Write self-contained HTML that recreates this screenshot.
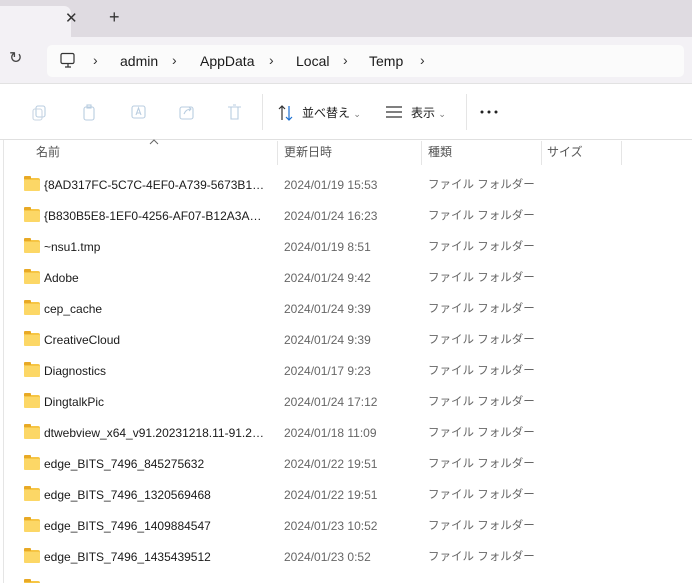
<!DOCTYPE html><html><head><meta charset="utf-8"><style>
*{margin:0;padding:0;box-sizing:border-box}
html,body{width:692px;height:583px;overflow:hidden}
body{background:#fff;font-family:"Liberation Sans","Noto Sans CJK JP",sans-serif;font-size:12px;line-height:16px;color:#1a1a1a;position:relative}
.abs{position:absolute}
.tabbar{left:0;top:0;width:692px;height:37px;background:#dfdbe1}
.tab{left:0;top:6px;width:71px;height:31px;background:#f3f1f5;border-radius:0 7px 0 0}
.addr{left:0;top:37px;width:692px;height:47px;background:#f3f1f5;border-bottom:1px solid #e2e2e2}
.box{left:47px;top:45px;width:637px;height:32px;background:#fbfbfb;border-radius:5px}
.bc{top:53px;font-size:14px;color:#1a1a1a}
.chev{top:52px;font-size:14px;color:#333}
.tb{top:84px;height:56px;width:692px;border-bottom:1px solid #e0e0e0;background:#fff}
.hdr{top:144px;font-size:12px;color:#555}
.vl{top:141px;height:24px;width:1px;background:#e5e5e5}
.row{left:24px;height:31px;width:660px}
.fold{position:absolute;left:0;top:9px;width:16px;height:13px;background:#f6c544;border-radius:2px}
.fold:before{content:"";position:absolute;left:0;top:-2px;width:7px;height:3px;background:#e8a925;border-radius:1px 1px 0 0}
.fold:after{content:"";position:absolute;left:0;top:2px;width:16px;height:11px;background:#fcd766;border-radius:1px}
.nm{position:absolute;left:20px;top:8px;font-size:12px;color:#1a1a1a;white-space:nowrap;width:225px;overflow:hidden;text-overflow:ellipsis}
.dt{position:absolute;left:260px;top:8px;color:#666}
.ty{position:absolute;left:404px;top:8px;color:#666;font-size:11.5px}
</style></head><body>
<div class="abs tabbar"></div>
<div class="abs tab"></div>
<div class="abs" style="left:65px;top:11px;font-size:15px;color:#333">✕</div>
<div class="abs" style="left:109px;top:9px;font-size:18px;color:#333">+</div>
<div class="abs addr"></div>
<div class="abs" style="left:9px;top:51px;font-size:16px;color:#444">↻</div>
<div class="abs box"></div>
<svg class="abs" style="left:59px;top:52px" width="18" height="18" viewBox="0 0 18 18"><rect x="2" y="1.5" width="13" height="10" rx="1.5" fill="none" stroke="#333" stroke-width="1.2"/><path d="M6 15h6M9 11.5v3.5" stroke="#333" stroke-width="1.2"/></svg>
<div class="abs chev" style="left:93px">›</div>
<div class="abs bc" style="left:120px">admin</div>
<div class="abs chev" style="left:172px">›</div>
<div class="abs bc" style="left:200px">AppData</div>
<div class="abs chev" style="left:269px">›</div>
<div class="abs bc" style="left:296px">Local</div>
<div class="abs chev" style="left:343px">›</div>
<div class="abs bc" style="left:369px">Temp</div>
<div class="abs chev" style="left:420px">›</div>
<div class="abs tb"></div>
<svg class="abs" style="left:0;top:100px" width="250" height="24" viewBox="0 0 250 24" fill="none" stroke="#b9cde0" stroke-width="1.1">
<rect x="36" y="6" width="9" height="11" rx="2"/><rect x="33" y="9" width="9" height="11" rx="2" stroke="#c9d6e3"/>
<rect x="84" y="7" width="10" height="13" rx="2"/><rect x="87" y="5" width="4" height="3"/>
<rect x="132" y="6" width="13" height="12" rx="2"/><path d="M136 15l2.5-7 2.5 7M137 13h3"/>
<rect x="180" y="7" width="13" height="12" rx="2"/><path d="M184 14q2-5 7-5M189 7l2 2-2 2"/>
<path d="M228 7h13M231 7v12h7V7M233 5h3"/>
</svg>
<div class="abs" style="left:262px;top:94px;width:1px;height:36px;background:#e5e5e5"></div>
<svg class="abs" style="left:277px;top:104px" width="18" height="18" viewBox="0 0 18 18" fill="none" stroke-width="1.2"><path d="M5 16V2M2 5l3-3 3 3" stroke="#333"/><path d="M12 2v14M9 13l3 3 3-3" stroke="#1a6fd1"/></svg>
<div class="abs" style="left:302px;top:105px;font-size:12px">並べ替え <span style="font-size:9px;color:#777">⌄</span></div>
<svg class="abs" style="left:386px;top:106px" width="17" height="12" viewBox="0 0 17 12" stroke="#333" stroke-width="1.2"><path d="M0 1h16M0 6h16M0 11h16"/></svg>
<div class="abs" style="left:411px;top:105px;font-size:12px">表示 <span style="font-size:9px;color:#777">⌄</span></div>
<div class="abs" style="left:466px;top:94px;width:1px;height:36px;background:#e5e5e5"></div>
<svg class="abs" style="left:480px;top:110px" width="20" height="4"><circle cx="2" cy="2" r="1.5" fill="#222"/><circle cx="9" cy="2" r="1.5" fill="#222"/><circle cx="16" cy="2" r="1.5" fill="#222"/></svg>
<div class="abs" style="left:0;top:140px;width:4px;height:443px;border-right:1px solid #e5e5e5"></div>
<svg class="abs" style="left:149px;top:139px" width="10" height="6"><path d="M1 5l4-4 4 4" fill="none" stroke="#666"/></svg>
<div class="abs hdr" style="left:36px">名前</div>
<div class="abs vl" style="left:277px"></div>
<div class="abs hdr" style="left:284px">更新日時</div>
<div class="abs vl" style="left:421px"></div>
<div class="abs hdr" style="left:428px">種類</div>
<div class="abs vl" style="left:541px"></div>
<div class="abs hdr" style="left:547px">サイズ</div>
<div class="abs vl" style="left:621px"></div>
<div class="abs row" style="top:169px"><i class="fold"></i><span class="nm">{8AD317FC-5C7C-4EF0-A739-5673B1C5D6...</span><span class="dt">2024/01/19 15:53</span><span class="ty">ファイル フォルダー</span></div>
<div class="abs row" style="top:200px"><i class="fold"></i><span class="nm">{B830B5E8-1EF0-4256-AF07-B12A3AED0F...</span><span class="dt">2024/01/24 16:23</span><span class="ty">ファイル フォルダー</span></div>
<div class="abs row" style="top:231px"><i class="fold"></i><span class="nm">~nsu1.tmp</span><span class="dt">2024/01/19 8:51</span><span class="ty">ファイル フォルダー</span></div>
<div class="abs row" style="top:262px"><i class="fold"></i><span class="nm">Adobe</span><span class="dt">2024/01/24 9:42</span><span class="ty">ファイル フォルダー</span></div>
<div class="abs row" style="top:293px"><i class="fold"></i><span class="nm">cep_cache</span><span class="dt">2024/01/24 9:39</span><span class="ty">ファイル フォルダー</span></div>
<div class="abs row" style="top:324px"><i class="fold"></i><span class="nm">CreativeCloud</span><span class="dt">2024/01/24 9:39</span><span class="ty">ファイル フォルダー</span></div>
<div class="abs row" style="top:355px"><i class="fold"></i><span class="nm">Diagnostics</span><span class="dt">2024/01/17 9:23</span><span class="ty">ファイル フォルダー</span></div>
<div class="abs row" style="top:386px"><i class="fold"></i><span class="nm">DingtalkPic</span><span class="dt">2024/01/24 17:12</span><span class="ty">ファイル フォルダー</span></div>
<div class="abs row" style="top:417px"><i class="fold"></i><span class="nm">dtwebview_x64_v91.20231218.11-91.2024...</span><span class="dt">2024/01/18 11:09</span><span class="ty">ファイル フォルダー</span></div>
<div class="abs row" style="top:448px"><i class="fold"></i><span class="nm">edge_BITS_7496_845275632</span><span class="dt">2024/01/22 19:51</span><span class="ty">ファイル フォルダー</span></div>
<div class="abs row" style="top:479px"><i class="fold"></i><span class="nm">edge_BITS_7496_1320569468</span><span class="dt">2024/01/22 19:51</span><span class="ty">ファイル フォルダー</span></div>
<div class="abs row" style="top:510px"><i class="fold"></i><span class="nm">edge_BITS_7496_1409884547</span><span class="dt">2024/01/23 10:52</span><span class="ty">ファイル フォルダー</span></div>
<div class="abs row" style="top:541px"><i class="fold"></i><span class="nm">edge_BITS_7496_1435439512</span><span class="dt">2024/01/23 0:52</span><span class="ty">ファイル フォルダー</span></div>
<div class="abs row" style="top:572px"><i class="fold"></i></div>
</body></html>
